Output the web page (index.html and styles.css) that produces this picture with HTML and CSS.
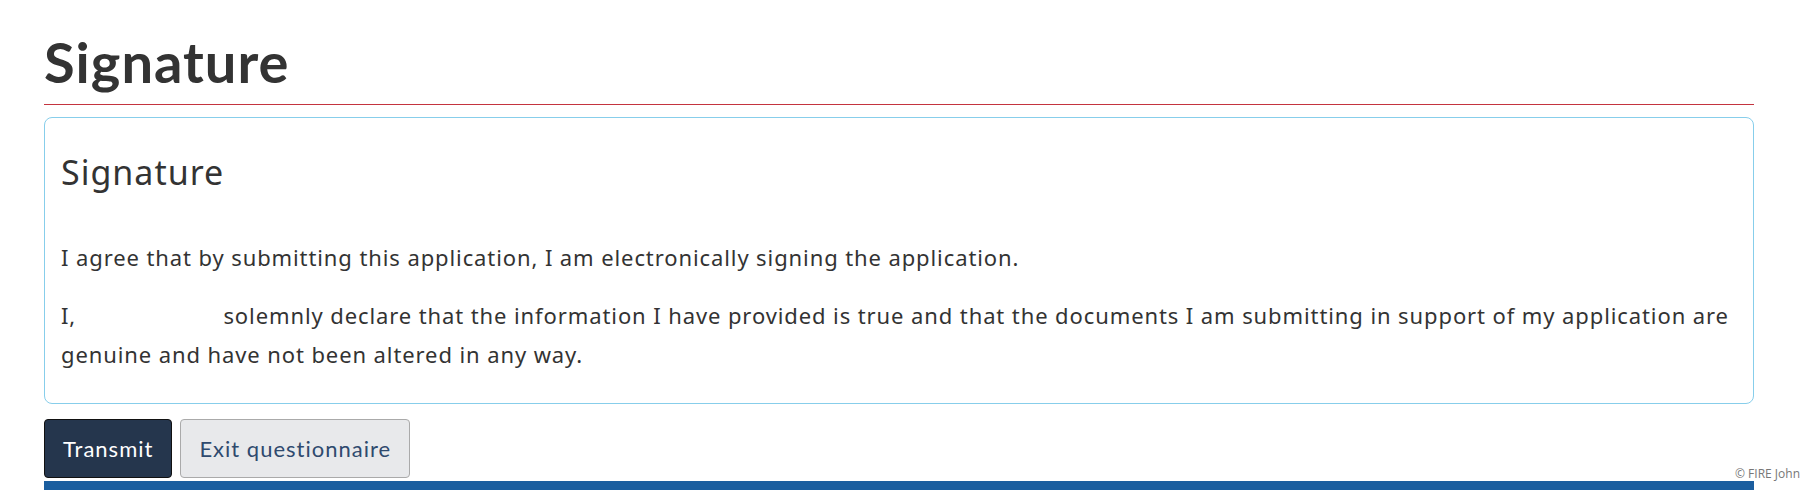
FILE: index.html
```html
<!DOCTYPE html>
<html lang="en">
<head>
    <meta charset="UTF-8">
    <meta name="viewport" content="width=device-width, initial-scale=1.0">
    <title>Signature</title>
    <link rel="stylesheet" href="styles.css">
</head>
<body>
    <div class="container">
        <h1 class="page-title">Signature</h1>

        <div class="sign-card">
            <h2>Signature</h2>
            <p>I agree that by submitting this application, I am electronically signing the application.</p>
            <p>I, <span class="sign-name"></span> solemnly declare that the information I have provided is true and that the documents I am submitting in support of my application are genuine and have not been altered in any way.</p>
        </div>

        <div class="buttons">
            <button class="btn btn-primary">Transmit</button>
            <button class="btn btn-cancel">Exit questionnaire</button>
        </div>

        <div class="footer-bar"></div>
    </div>

    <div class="copyright">&copy; FIRE John</div>
</body>
</html>
```

FILE: styles.css
```css
* {
    margin: 0;
    padding: 0;
    box-sizing: border-box;
}

body {
    font-family: 'Noto Sans', 'Open Sans', sans-serif;
    background-color: #fff;
    color: #333;
    overflow: hidden;
}

.container {
    padding: 28px 60px 0 44px;
}

.page-title {
    font-family: Lato, 'Noto Sans', sans-serif;
    font-weight: 700;
    font-size: 56px;
    line-height: 1.2;
    letter-spacing: 1px;
    color: #333;
    padding-bottom: 9px;
    border-bottom: 1px solid #c4343f;
}

.sign-card {
    margin-top: 12px;
    border: 1px solid #87ceeb;
    border-radius: 8px;
    padding: 16px 16px 16px;
}

.sign-card h2 {
    font-size: 34px;
    font-weight: 400;
    line-height: 1.2;
    letter-spacing: 1px;
    margin: 18px 0 45px;
}

.sign-card p {
    font-size: 22px;
    line-height: 39px;
    letter-spacing: 0.9px;
    margin-bottom: 19px;
}

.sign-card p:last-child {
    margin-bottom: 13px;
}

.sign-name {
    display: inline-block;
    width: 134px;
}

.buttons {
    display: flex;
    gap: 8px;
    margin-top: 15px;
}

.btn {
    font-family: Lato, 'Noto Sans', sans-serif;
    font-size: 22px;
    letter-spacing: 1px;
    height: 59px;
    padding: 0 18px;
    border-radius: 4px;
    cursor: pointer;
}

.btn-primary {
    background: #25364d;
    color: #fff;
    border: 1px solid #111;
}

.btn-cancel {
    background: #e8e9eb;
    color: #2f4a6e;
    border: 1px solid #aaa;
}

.footer-bar {
    margin-top: 3px;
    height: 10px;
    background: #1b5e9f;
}

.copyright {
    position: absolute;
    top: 465px;
    right: 14px;
    font-family: 'Open Sans', sans-serif;
    font-size: 12px;
    color: #777;
}
```
